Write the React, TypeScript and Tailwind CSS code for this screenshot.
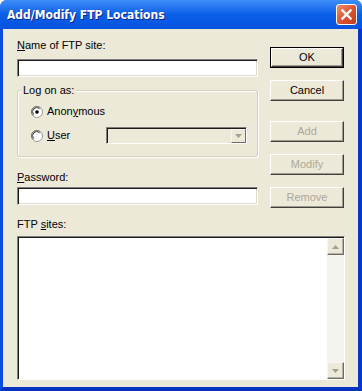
const ui = { fontFamily: '"Liberation Sans", Arial, sans-serif' };

function Radio({ checked }: { checked?: boolean }) {
  return (
    <svg width="12" height="12" viewBox="0 0 12 12" className="shrink-0">
      <circle cx="6" cy="6" r="5.5" fill="#fff" stroke="#9c9a8f" />
      <path d="M2 9.5 A5 5 0 0 1 9.5 2" fill="none" stroke="#7a786d" strokeWidth="1" />
      <path d="M2.8 8.6 A4 4 0 0 1 8.6 2.8" fill="none" stroke="#3c3b36" strokeWidth="1" />
      {checked && <circle cx="6" cy="6" r="1.8" fill="#000" />}
    </svg>
  );
}

function Arrow({ up, color = "#a3a091" }: { up?: boolean; color?: string }) {
  return (
    <svg width="7" height="4" viewBox="0 0 7 4">
      <path d={up ? "M0 4 L7 4 L3.5 0 Z" : "M0 0 L7 0 L3.5 4 Z"} fill={color} />
    </svg>
  );
}

function Field({ className = "" }: { className?: string }) {
  return (
    <div
      className={`border border-t-[#7f7f7f] border-l-[#7f7f7f] border-r-white border-b-white shadow-[inset_1px_1px_0_#1a1a1a,inset_-1px_-1px_0_#e0ddd0] ${className}`}
    />
  );
}

function Btn({ label, def, off }: { label: string; def?: boolean; off?: boolean }) {
  return (
    <div
      className={`h-[21px] w-[74px] flex items-center justify-center text-[11px] ${
        def ? "border border-black" : ""
      } ${off ? "text-[#aca899]" : "text-black"}`}
    >
      <div className="w-full h-full flex items-center justify-center border border-t-white border-l-white border-r-[#404040] border-b-[#404040] shadow-[inset_-1px_-1px_0_#9d9a8b] bg-[#ece9d8]">
        {label}
      </div>
    </div>
  );
}

function ScrollBtn({ up }: { up?: boolean }) {
  return (
    <div className="h-[17px] w-[17px] flex items-center justify-center bg-[#ece9d8] border border-t-[#f7f6f1] border-l-[#f7f6f1] border-r-[#6f6d63] border-b-[#6f6d63] shadow-[inset_-1px_-1px_0_#b4b1a2]">
      <Arrow up={up} />
    </div>
  );
}

export default function App() {
  return (
    <div className="w-[362px] h-[391px] flex flex-col bg-[#0842d8] rounded-t-[7px] overflow-hidden" style={ui}>
      {/* Title bar */}
      <div className="h-[29px] shrink-0 flex items-center justify-between pl-[7px] pr-[5px] bg-gradient-to-b from-[#3d8ef8] via-[#0a5ee8] to-[#0653df]">
        <span
          className="text-white font-bold text-[12px] [text-shadow:1px_1px_0_#0a2a8c]"
          style={{ fontFamily: '"DejaVu Sans Condensed", "Liberation Sans", sans-serif' }}
        >
          Add/Modify FTP Locations
        </span>
        <div className="w-[21px] h-[21px] rounded-[3px] border border-white bg-gradient-to-br from-[#ef8f70] via-[#dc5534] to-[#c33b17] flex items-center justify-center">
          <svg width="11" height="11" viewBox="0 0 11 11">
            <path d="M1.5 1.5 L9.5 9.5 M9.5 1.5 L1.5 9.5" stroke="#fff" strokeWidth="2.4" strokeLinecap="square" />
          </svg>
        </div>
      </div>

      {/* Body, framed by the blue window border */}
      <div className="flex-1 flex border-l-[3px] border-r-[4px] border-b-[4px] border-l-[#0a4ee0] border-r-[#0638c8] border-b-[#0533c0]">
        <div className="flex-1 bg-[#ece9d8] pl-[14px] pr-[13px] text-[11px] text-black">
          <div className="flex items-start">
            {/* Left column */}
            <div className="w-[241px] flex flex-col pt-[10px]">
              <div className="h-[13px] leading-[13px]">
                <u>N</u>ame of FTP site:
              </div>
              <Field className="mt-[7px] h-[18px] bg-white" />

              <div className="mt-[13px] h-[67px] border border-[#d0d0bf] rounded-[3px] shadow-[inset_1px_1px_0_#fff,1px_1px_0_#fff] flex flex-col">
                <div className="-mt-[7px] ml-[3px] w-fit px-[2px] h-[13px] leading-[13px] bg-[#ece9d8]">Log on as:</div>
                <div className="mt-[8px] ml-[13px] h-[13px] flex items-center gap-[4px]">
                  <Radio checked />
                  <span className="leading-[13px]">
                    Anon<span className="underline">y</span>mous
                  </span>
                </div>
                <div className="mt-[9px] ml-[13px] h-[17px] flex items-center">
                  <Radio />
                  <span className="ml-[4px] w-[59px] leading-[13px]">
                    <u>U</u>ser
                  </span>
                  <div className="w-[141px] h-[17px] flex items-stretch border border-t-[#7f7f7f] border-l-[#7f7f7f] border-r-white border-b-white shadow-[inset_1px_1px_0_#1a1a1a] pl-[1px] pt-[1px]">
                    <div className="flex-1 bg-[#ece9d8]" />
                    <div className="w-[15px] flex items-center justify-center bg-[#ece9d8] border border-t-[#f7f6f1] border-l-[#f7f6f1] border-r-[#6f6d63] border-b-[#6f6d63]">
                      <Arrow />
                    </div>
                  </div>
                </div>
              </div>

              <div className="mt-[14px] h-[13px] leading-[13px]">
                <u>P</u>assword:
              </div>
              <Field className="mt-[3px] h-[18px] bg-white" />
            </div>

            {/* Right column */}
            <div className="ml-[12px] pt-[18px] flex flex-col">
              <Btn label="OK" def />
              <div className="mt-[12px]">
                <Btn label="Cancel" />
              </div>
              <div className="mt-[20px]">
                <Btn label="Add" off />
              </div>
              <div className="mt-[12px]">
                <Btn label="Modify" off />
              </div>
              <div className="mt-[12px]">
                <Btn label="Remove" off />
              </div>
            </div>
          </div>

          <div className="mt-[10px] h-[13px] leading-[13px]">
            FTP <u>s</u>ites:
          </div>
          <div className="mt-[5px] h-[144px] flex border border-t-[#7f7f7f] border-l-[#7f7f7f] border-r-white border-b-white shadow-[inset_1px_1px_0_#1a1a1a] pl-[1px] pt-[1px] bg-white">
            <div className="flex-1 bg-white" />
            <div className="w-[17px] flex flex-col justify-between bg-[#f4f3ee]">
              <ScrollBtn up />
              <ScrollBtn />
            </div>
          </div>
        </div>
      </div>
    </div>
  );
}
